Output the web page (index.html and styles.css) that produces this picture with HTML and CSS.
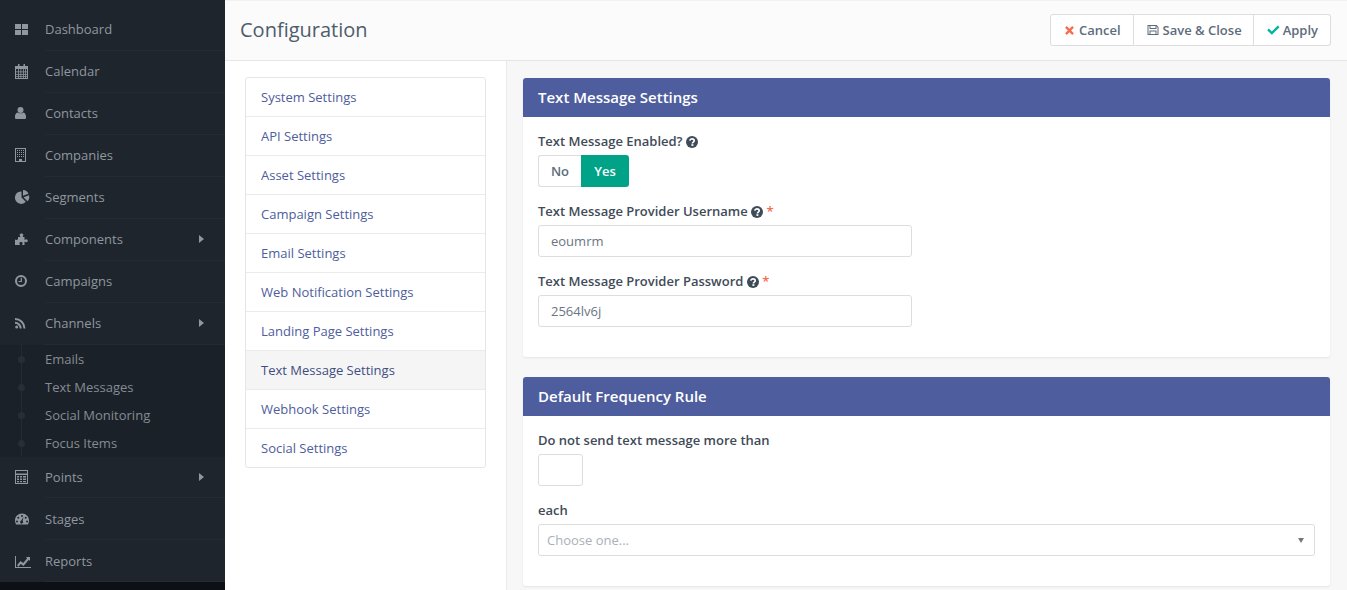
FILE: index.html
```html
<!DOCTYPE html>
<html lang="en">
<head>
  <meta charset="UTF-8">
  <meta name="viewport" content="width=device-width, initial-scale=1.0">
  <title>Configuration</title>
  <link rel="stylesheet" href="styles.css">
</head>
<body>
  <aside class="sidebar">
    <ul class="nav">
      <li class="nav-item">
        <svg class="nav-icon" viewBox="0 0 18 16"><path d="M0 3h6v5H0zM7 3h6v5H7zM0 9h6v5H0zM7 9h6v5H7z"/></svg>
        <span>Dashboard</span>
      </li>
      <li class="nav-item">
        <svg class="nav-icon" viewBox="0 0 18 16"><path d="M3 1h1.500v2H8.500V1H10v2h3v13H0V3h3zM1 6v9h11V6z"/><path d="M1 8.500h11v.8H1zM1 11h11v.8H1zM1 13h11v.8H1zM3 6h.8v9H3zM5.500 6h.8v9h-.8zM8 6h.8v9H8zM10 6h.8v9h-.8z"/></svg>
        <span>Calendar</span>
      </li>
      <li class="nav-item">
        <svg class="nav-icon" viewBox="0 0 18 16"><circle cx="5.500" cy="5" r="3"/><path d="M0 11.500C0 9.500 1 8 2.500 7.500 3.500 8.500 7.500 8.500 8.500 7.500 10 8 11 9.500 11 11.500V13c0 .8-.7 1-1.500 1h-8C.7 14 0 13.800 0 13z"/></svg>
        <span>Contacts</span>
      </li>
      <li class="nav-item">
        <svg class="nav-icon" viewBox="0 0 18 16"><path fill-rule="evenodd" d="M0 1h11v14H0zM1 2v12h3v-2h3v2h3V2z"/><path d="M2 3h1v1H2zM4 3h1v1H4zM6 3h1v1H6zM8 3h1v1H8zM2 5h1v1H2zM4 5h1v1H4zM6 5h1v1H6zM8 5h1v1H8zM2 7h1v1H2zM4 7h1v1H4zM6 7h1v1H6zM8 7h1v1H8zM2 9h1v1H2zM4 9h1v1H4zM6 9h1v1H6zM8 9h1v1H8z"/></svg>
        <span>Companies</span>
      </li>
      <li class="nav-item">
        <svg class="nav-icon" viewBox="0 0 18 16"><path d="M6.500 2.500v6l4.300 4.300A6.200 6.200 0 1 1 6.500 2.500z"/><path d="M8 1a6.200 6.200 0 0 1 5.500 3.800L8 6.800z"/><path d="M8.500 8.300l5.500-2a6 6 0 0 1-1.500 6z"/></svg>
        <span>Segments</span>
      </li>
      <li class="nav-item">
        <svg class="nav-icon" viewBox="0 0 18 16"><path d="M3 6h2.500c-.5-.8-.8-1.200-.8-2 0-1 .8-1.500 1.800-1.500S8.300 3 8.300 4c0 .8-.3 1.200-.8 2H9.500v3c.6-.5 1-.8 1.700-.8 1 0 1.600.8 1.600 1.500s-.6 1.500-1.600 1.500c-.7 0-1.100-.3-1.700-.8V14H7c.4-.7.6-1 .6-1.600 0-1-.8-1.400-1.600-1.400s-1.600.5-1.600 1.400c0 .6.200.9.600 1.600H0V8.500c.5.300 1 .5 1.500.5C2.500 9 3 8.200 3 7.500z"/></svg>
        <span>Components</span>
        <i class="nav-arrow"></i>
      </li>
      <li class="nav-item">
        <svg class="nav-icon" viewBox="0 0 18 16"><path fill-rule="evenodd" d="M6 2a6 6 0 1 1 0 12A6 6 0 0 1 6 2zm0 2a4 4 0 1 0 0 8 4 4 0 0 0 0-8z"/><path d="M5.700 4.700h1.200V9H3.500V7.900h2.200z"/></svg>
        <span>Campaigns</span>
      </li>
      <li class="nav-item nav-open">
        <svg class="nav-icon" viewBox="0 0 18 16"><circle cx="1.700" cy="12" r="1.500"/><path d="M0 6.800a6.700 6.700 0 0 1 6.700 6.700H4.700A4.700 4.700 0 0 0 0 8.800z"/><path d="M0 3a10.500 10.500 0 0 1 10.500 10.500H8.500A8.500 8.500 0 0 0 0 5z"/></svg>
        <span>Channels</span>
        <i class="nav-arrow"></i>
      </li>
      <li>
        <ul class="subnav">
          <li class="subnav-item"><i class="subnav-dot"></i><span>Emails</span></li>
          <li class="subnav-item"><i class="subnav-dot"></i><span>Text Messages</span></li>
          <li class="subnav-item"><i class="subnav-dot"></i><span>Social Monitoring</span></li>
          <li class="subnav-item"><i class="subnav-dot"></i><span>Focus Items</span></li>
        </ul>
      </li>
      <li class="nav-item nav-after-sub">
        <svg class="nav-icon" viewBox="0 0 18 16"><path fill-rule="evenodd" d="M0 1h13v14H0zM1 2v2.500h11V2zM1 6v8h11V6z"/><path d="M2 7h2v1.500H2zM5 7h2v1.500H5zM8 7h3v1.500H8zM2 9.500h2V11H2zM5 9.500h2V11H5zM8 9.500h3V11H8zM2 12h2v1.300H2zM5 12h2v1.300H5zM8 12h3v1.300H8z"/></svg>
        <span>Points</span>
        <i class="nav-arrow"></i>
      </li>
      <li class="nav-item">
        <svg class="nav-icon" viewBox="0 0 18 16"><path fill-rule="evenodd" d="M7 2.500c3.900 0 7 3.100 7 7 0 1.500-.4 2.900-1.200 4H1.200C.4 12.400 0 11 0 9.500c0-3.900 3.100-7 7-7zM7 4a1 1 0 1 0 0 2 1 1 0 0 0 0-2zM3.300 5.800a1 1 0 1 0 0 2 1 1 0 0 0 0-2zM10.700 5.800a1 1 0 1 0 0 2 1 1 0 0 0 0-2zM2 9.500a1 1 0 1 0 0 2 1 1 0 0 0 0-2zM12 9.500a1 1 0 1 0 0 2 1 1 0 0 0 0-2zM8.500 6L6.300 9.600a1.500 1.500 0 1 0 1.400.4z"/></svg>
        <span>Stages</span>
      </li>
      <li class="nav-item">
        <svg class="nav-icon" viewBox="0 0 18 16"><path d="M0 3h1v11h15v1H0z"/><path d="M2.200 12l3.300-4 2.700 2 4-4.800-1.400-1.200H15v4l-1.200-1.300-5.300 6.300-2.700-2-2.600 3z"/></svg>
        <span>Reports</span>
      </li>
    </ul>
  </aside>

  <main class="main">
    <header class="page-header">
      <h1>Configuration</h1>
      <div class="btn-group">
        <button class="btn" type="button">
          <svg class="btn-icon icon-cancel" viewBox="0 0 12 12"><path d="M3 1.200L6 4.200l3-3L10.800 3l-3 3 3 3L9 10.800l-3-3-3 3L1.200 9l3-3-3-3z"/></svg>
          Cancel
        </button>
        <button class="btn btn-save" type="button">
          <svg class="btn-icon icon-save" viewBox="0 0 12 12"><path fill-rule="evenodd" d="M.5 1h9L11.500 3v8H.5zm1 1v8h1V6.500h7V10h1V3.500L9.500 2.200V5h-7V2zM3.500 2v2h5V2zM3.500 7.500V10h5V7.500z"/></svg>
          Save &amp; Close
        </button>
        <button class="btn" type="button">
          <svg class="btn-icon icon-apply" viewBox="0 0 13 12"><path d="M1.800 4.500l3 3 6-6L12.500 3.200 4.800 10.800.2 6.200z"/></svg>
          Apply
        </button>
      </div>
    </header>

    <div class="page-body">
      <div class="config-menu">
        <ul class="list-group">
          <li class="list-item">System Settings</li>
          <li class="list-item">API Settings</li>
          <li class="list-item">Asset Settings</li>
          <li class="list-item">Campaign Settings</li>
          <li class="list-item">Email Settings</li>
          <li class="list-item">Web Notification Settings</li>
          <li class="list-item">Landing Page Settings</li>
          <li class="list-item active">Text Message Settings</li>
          <li class="list-item">Webhook Settings</li>
          <li class="list-item">Social Settings</li>
        </ul>
      </div>

      <div class="config-content">
        <section class="panel">
          <h2 class="panel-heading">Text Message Settings</h2>
          <div class="panel-body">
            <div class="form-group">
              <label class="form-label">Text Message Enabled?
                <svg class="help" viewBox="0 0 12 12"><circle cx="6" cy="6" r="6"/><path class="help-mark" d="M3.800 4.700C4 3.500 5 2.900 6 2.900c1.300 0 2.200.8 2.200 1.800 0 1.400-1.800 1.400-1.800 2.700"/><rect class="help-dot" x="5.400" y="8.200" width="2" height="1.700"/></svg>
              </label>
              <div class="toggle">
                <span class="toggle-no">No</span>
                <span class="toggle-yes">Yes</span>
              </div>
            </div>
            <div class="form-group">
              <label class="form-label" for="sms-user">Text Message Provider Username
                <svg class="help" viewBox="0 0 12 12"><circle cx="6" cy="6" r="6"/><path class="help-mark" d="M3.800 4.700C4 3.500 5 2.900 6 2.900c1.300 0 2.200.8 2.200 1.800 0 1.400-1.800 1.400-1.800 2.700"/><rect class="help-dot" x="5.400" y="8.200" width="2" height="1.700"/></svg>
                <span class="required">*</span>
              </label>
              <input class="form-control input-half" id="sms-user" type="text" value="eoumrm">
            </div>
            <div class="form-group">
              <label class="form-label" for="sms-pass">Text Message Provider Password
                <svg class="help" viewBox="0 0 12 12"><circle cx="6" cy="6" r="6"/><path class="help-mark" d="M3.800 4.700C4 3.500 5 2.900 6 2.900c1.300 0 2.200.8 2.200 1.800 0 1.400-1.800 1.400-1.800 2.700"/><rect class="help-dot" x="5.400" y="8.200" width="2" height="1.700"/></svg>
                <span class="required">*</span>
              </label>
              <input class="form-control input-half" id="sms-pass" type="text" value="2564lv6j">
            </div>
          </div>
        </section>

        <section class="panel">
          <h2 class="panel-heading">Default Frequency Rule</h2>
          <div class="panel-body">
            <div class="form-group">
              <label class="form-label" for="freq-number">Do not send text message more than</label>
              <input class="form-control input-small" id="freq-number" type="text">
            </div>
            <div class="form-group">
              <label class="form-label">each</label>
              <div class="form-control select-box">
                <span>Choose one...</span>
                <i class="select-arrow"></i>
              </div>
            </div>
          </div>
        </section>
      </div>
    </div>
  </main>
</body>
</html>
```

FILE: styles.css
```css
* {
  box-sizing: border-box;
}

html, body {
  height: 590px;
  overflow: hidden;
}

body {
  display: flex;
  margin: 0;
  font-family: "Open Sans", sans-serif;
  font-size: 13px;
  line-height: 18px;
  color: #4e5d6c;
  background-color: #fff;
}

ul {
  list-style: none;
  margin: 0;
  padding: 0;
}

/* sidebar */
.sidebar {
  flex: none;
  width: 225px;
  height: 590px;
  background-color: #0d1014;
}

.nav {
  padding-top: 9px;
  background-color: #1e252d;
}

.nav-item {
  display: flex;
  align-items: center;
  height: 42px;
  padding: 0 0 2px 15px;
  color: #90979e;
  background-image: linear-gradient(#242b33, #242b33);
  background-repeat: no-repeat;
  background-position: 45px 100%;
  background-size: 180px 1px;
}

.nav-after-sub,
.nav-after-sub ~ .nav-item {
  padding-bottom: 0;
}

.nav-icon {
  flex: none;
  width: 18px;
  height: 16px;
  margin-right: 12px;
  fill: #90979e;
}

.nav-arrow {
  width: 0;
  height: 0;
  margin-left: auto;
  margin-right: 21px;
  border-left: 5px solid #90979e;
  border-top: 4px solid transparent;
  border-bottom: 4px solid transparent;
}

.subnav {
  margin-bottom: -1px;
  background-color: #1b2128;
  background-image: linear-gradient(#242b33, #242b33);
  background-repeat: no-repeat;
  background-position: 21px 0;
  background-size: 1px 100%;
}

.subnav-item {
  display: flex;
  align-items: center;
  height: 28px;
  padding-left: 18px;
  color: #858c93;
}

.subnav-dot {
  width: 7px;
  height: 7px;
  margin-right: 20px;
  border-radius: 50%;
  background-color: #262e37;
}

/* main area */
.main {
  flex: 1;
  min-width: 0;
}

.page-header {
  display: flex;
  align-items: center;
  justify-content: space-between;
  height: 61px;
  padding: 0 16px 0 15px;
  background-color: #fbfbfb;
  border-bottom: 1px solid #e6e6e6;
  box-shadow: inset 0 1px 0 #f2f2f2;
}

.page-header h1 {
  margin: 0;
  font-size: 20px;
  font-weight: 400;
  line-height: 28px;
  color: #4e5d6c;
}

.btn-group {
  display: flex;
  height: 32px;
}

.btn {
  display: flex;
  align-items: center;
  height: 32px;
  padding: 0 12px 0 13px;
  font-family: inherit;
  font-size: 13px;
  font-weight: 600;
  color: #5d6c7c;
  background-color: #fff;
  border: 1px solid #ddd;
  border-left-width: 0;
}

.btn:first-child {
  border-left-width: 1px;
  border-radius: 3px 0 0 3px;
}

.btn:last-child {
  border-radius: 0 3px 3px 0;
}

.btn-save {
  padding-right: 11px;
}

.btn-icon {
  width: 11px;
  height: 11px;
  margin-right: 4px;
}

.icon-cancel {
  fill: #f86b4f;
}

.icon-save {
  width: 12px;
  height: 12px;
  fill: #5d6c7c;
}

.icon-apply {
  width: 13px;
  height: 12px;
  margin-right: 3px;
  fill: #00b49c;
}

.page-body {
  display: flex;
  height: 529px;
}

.config-menu {
  flex: none;
  width: 282px;
  padding: 16px 20px 0;
  border-right: 1px solid #ebebeb;
}

.list-group {
  border: 1px solid #e6e6e6;
  border-radius: 3px;
}

.list-item {
  height: 39px;
  padding: 10px 15px;
  color: #4e5d9d;
  border-bottom: 1px solid #ebebeb;
}

.list-item:last-child {
  height: 38px;
  border-bottom: 0;
}

.list-item.active {
  color: #414d80;
  background-color: #f5f5f5;
}

.config-content {
  flex: 1;
  padding: 17px 17px 0 16px;
  background-color: #f7f7f7;
}

.panel {
  margin-bottom: 20px;
  background-color: #fff;
  border-radius: 3px;
  box-shadow: 0 1px 2px rgba(0, 0, 0, 0.08);
}

.panel-heading {
  height: 39px;
  margin: 0;
  padding: 9px 15px;
  font-size: 15px;
  font-weight: 600;
  line-height: 20px;
  color: #fff;
  background-color: #4e5d9d;
  border-radius: 3px 3px 0 0;
}

.panel-body {
  padding: 15px;
}

.form-group {
  margin-bottom: 15px;
}

.form-label {
  display: block;
  margin-bottom: 5px;
  font-weight: 600;
  color: #3f4b58;
}

.help {
  width: 12px;
  height: 12px;
  vertical-align: -2px;
  fill: #3f4b58;
}

.help-mark {
  fill: none;
  stroke: #fff;
  stroke-width: 1.7;
}

.help-dot {
  fill: #fff;
}

.required {
  color: #f86b4f;
}

.toggle {
  display: inline-flex;
  height: 32px;
  font-weight: 600;
  line-height: 30px;
}

.toggle-no {
  width: 43px;
  text-align: center;
  color: #5d6c7c;
  border: 1px solid #ddd;
  border-right: 0;
  border-radius: 3px 0 0 3px;
}

.toggle-yes {
  width: 48px;
  line-height: 32px;
  text-align: center;
  color: #fff;
  background-color: #00a388;
  border-radius: 0 3px 3px 0;
}

.form-control {
  display: block;
  height: 32px;
  padding: 0 12px;
  font-family: inherit;
  font-size: 13px;
  color: #6a7682;
  background-color: #fff;
  border: 1px solid #ddd;
  border-radius: 3px;
}

.input-half {
  width: 374px;
}

.input-small {
  width: 45px;
}

.select-box {
  display: flex;
  align-items: center;
  justify-content: space-between;
  padding: 0 9px 0 8px;
  color: #a9b0b7;
}

.select-arrow {
  width: 0;
  height: 0;
  margin-right: 1px;
  border-top: 5px solid #777;
  border-left: 3.500px solid transparent;
  border-right: 3.500px solid transparent;
}
```
